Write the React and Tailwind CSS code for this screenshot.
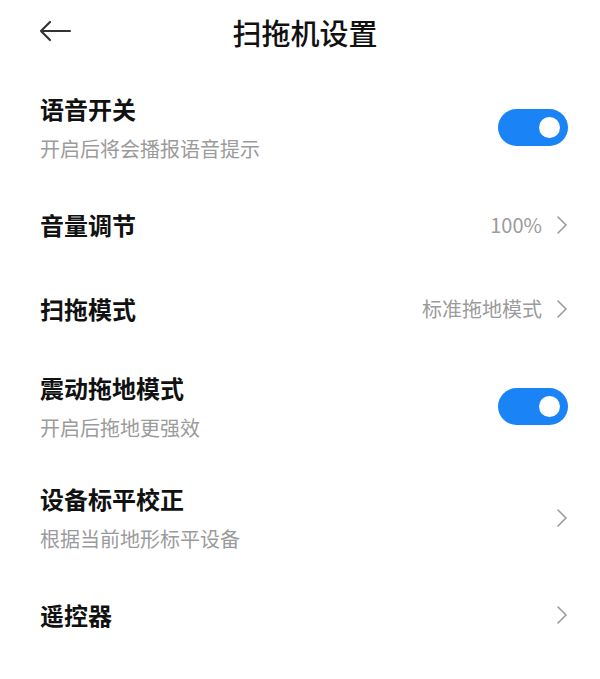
import React from "react";

const font = { fontFamily: '"Noto Sans CJK SC", "Noto Sans", sans-serif' };

function Chevron() {
  return (
    <svg width="12" height="20" viewBox="0 0 12 20" className="shrink-0">
      <path d="M2 2 L10 10 L2 18" fill="none" stroke="#9a9a9a" strokeWidth="1.6" strokeLinecap="round" strokeLinejoin="round" />
    </svg>
  );
}

function Toggle() {
  return (
    <div className="w-[70px] h-[37px] rounded-full bg-[#1a83f6] flex items-center justify-end pr-[8px] shrink-0">
      <div className="w-[21px] h-[21px] rounded-full bg-white" />
    </div>
  );
}

function Row({ title, sub, right, tall }) {
  return (
    <div className={`flex items-center justify-between pl-[40px] pr-[32px] ${tall ? "h-[111px]" : "h-[84px]"}`}>
      <div className="flex flex-col">
        <div className="text-[24px] leading-[30px] font-bold text-[#111]">{title}</div>
        {sub && <div className="mt-[12px] text-[20px] leading-[26px] text-[#9b9b9b]">{sub}</div>}
      </div>
      {right}
    </div>
  );
}

function Value({ text }) {
  return (
    <div className="flex items-center gap-[14px]">
      <span className="text-[20px] leading-[26px] text-[#9b9b9b]">{text}</span>
      <Chevron />
    </div>
  );
}

export default function App() {
  return (
    <div className="w-[600px] h-[679px] bg-white overflow-hidden" style={font}>
      <div className="relative h-[64px] flex items-center justify-center">
        <svg width="34" height="22" viewBox="0 0 34 22" className="absolute left-[38px] top-[20px]">
          <path d="M32 11 H3 M12 2 L3 11 L12 20" fill="none" stroke="#333" strokeWidth="2.2" strokeLinecap="round" strokeLinejoin="round" />
        </svg>
        <div className="text-[29px] leading-[36px] font-medium text-[#111] ml-[10px]">扫拖机设置</div>
      </div>
      <div className="pt-[8px]">
        <Row tall title="语音开关" sub="开启后将会播报语音提示" right={<Toggle />} />
        <Row title="音量调节" right={<Value text="100%" />} />
        <Row title="扫拖模式" right={<Value text="标准拖地模式" />} />
        <Row tall title="震动拖地模式" sub="开启后拖地更强效" right={<Toggle />} />
        <Row tall title="设备标平校正" sub="根据当前地形标平设备" right={<Chevron />} />
        <Row title="遥控器" right={<Chevron />} />
      </div>
    </div>
  );
}
